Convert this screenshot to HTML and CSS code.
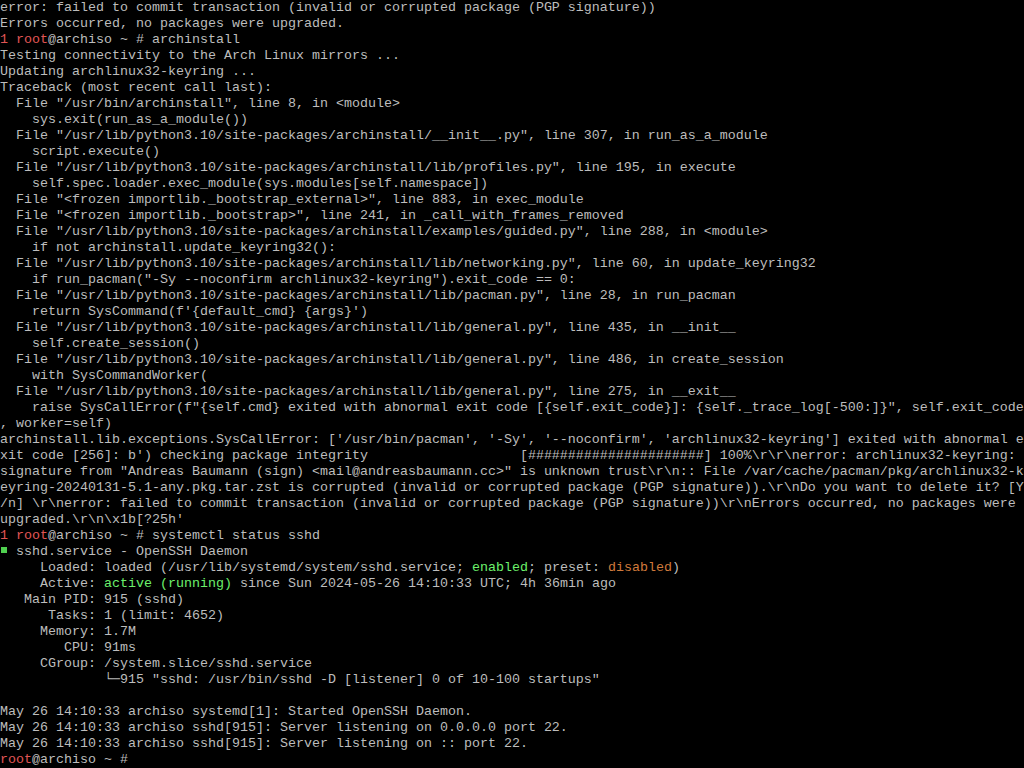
FILE: index.html
```html
<!DOCTYPE html>
<html>
<head>
<meta charset="utf-8">
<link rel="stylesheet" href="styles.css">
</head>
<body>
<div class="term">
<div class="ln">error: failed to commit transaction (invalid or corrupted package (PGP signature))</div>
<div class="ln">Errors occurred, no packages were upgraded.</div>
<div class="ln"><span class="red">1 root</span>@archiso ~ # archinstall</div>
<div class="ln">Testing connectivity to the Arch Linux mirrors ...</div>
<div class="ln">Updating archlinux32-keyring ...</div>
<div class="ln">Traceback (most recent call last):</div>
<div class="ln">  File "/usr/bin/archinstall", line 8, in &lt;module&gt;</div>
<div class="ln">    sys.exit(run_as_a_module())</div>
<div class="ln">  File "/usr/lib/python3.10/site-packages/archinstall/__init__.py", line 307, in run_as_a_module</div>
<div class="ln">    script.execute()</div>
<div class="ln">  File "/usr/lib/python3.10/site-packages/archinstall/lib/profiles.py", line 195, in execute</div>
<div class="ln">    self.spec.loader.exec_module(sys.modules[self.namespace])</div>
<div class="ln">  File "&lt;frozen importlib._bootstrap_external&gt;", line 883, in exec_module</div>
<div class="ln">  File "&lt;frozen importlib._bootstrap&gt;", line 241, in _call_with_frames_removed</div>
<div class="ln">  File "/usr/lib/python3.10/site-packages/archinstall/examples/guided.py", line 288, in &lt;module&gt;</div>
<div class="ln">    if not archinstall.update_keyring32():</div>
<div class="ln">  File "/usr/lib/python3.10/site-packages/archinstall/lib/networking.py", line 60, in update_keyring32</div>
<div class="ln">    if run_pacman("-Sy --noconfirm archlinux32-keyring").exit_code == 0:</div>
<div class="ln">  File "/usr/lib/python3.10/site-packages/archinstall/lib/pacman.py", line 28, in run_pacman</div>
<div class="ln">    return SysCommand(f'{default_cmd} {args}')</div>
<div class="ln">  File "/usr/lib/python3.10/site-packages/archinstall/lib/general.py", line 435, in __init__</div>
<div class="ln">    self.create_session()</div>
<div class="ln">  File "/usr/lib/python3.10/site-packages/archinstall/lib/general.py", line 486, in create_session</div>
<div class="ln">    with SysCommandWorker(</div>
<div class="ln">  File "/usr/lib/python3.10/site-packages/archinstall/lib/general.py", line 275, in __exit__</div>
<div class="ln">    raise SysCallError(f"{self.cmd} exited with abnormal exit code [{self.exit_code}]: {self._trace_log[-500:]}", self.exit_code</div>
<div class="ln">, worker=self)</div>
<div class="ln">archinstall.lib.exceptions.SysCallError: ['/usr/bin/pacman', '-Sy', '--noconfirm', 'archlinux32-keyring'] exited with abnormal e</div>
<div class="ln">xit code [256]: b') checking package integrity                   [######################] 100%\r\r\nerror: archlinux32-keyring: </div>
<div class="ln">signature from "Andreas Baumann (sign) &lt;mail@andreasbaumann.cc&gt;" is unknown trust\r\n:: File /var/cache/pacman/pkg/archlinux32-k</div>
<div class="ln">eyring-20240131-5.1-any.pkg.tar.zst is corrupted (invalid or corrupted package (PGP signature)).\r\nDo you want to delete it? [Y</div>
<div class="ln">/n] \r\nerror: failed to commit transaction (invalid or corrupted package (PGP signature))\r\nErrors occurred, no packages were </div>
<div class="ln">upgraded.\r\n\x1b[?25h'</div>
<div class="ln"><span class="red">1 root</span>@archiso ~ # systemctl status sshd</div>
<div class="ln"><span class="dot"></span> sshd.service - OpenSSH Daemon</div>
<div class="ln">     Loaded: loaded (/usr/lib/systemd/system/sshd.service; <span class="green">enabled</span>; preset: <span class="orange">disabled</span>)</div>
<div class="ln">     Active: <span class="green">active (running)</span> since Sun 2024-05-26 14:10:33 UTC; 4h 36min ago</div>
<div class="ln">   Main PID: 915 (sshd)</div>
<div class="ln">      Tasks: 1 (limit: 4652)</div>
<div class="ln">     Memory: 1.7M</div>
<div class="ln">        CPU: 91ms</div>
<div class="ln">     CGroup: /system.slice/sshd.service</div>
<div class="ln">             └─915 "sshd: /usr/bin/sshd -D [listener] 0 of 10-100 startups"</div>
<div class="ln"> </div>
<div class="ln">May 26 14:10:33 archiso systemd[1]: Started OpenSSH Daemon.</div>
<div class="ln">May 26 14:10:33 archiso sshd[915]: Server listening on 0.0.0.0 port 22.</div>
<div class="ln">May 26 14:10:33 archiso sshd[915]: Server listening on :: port 22.</div>
<div class="ln"><span class="red">root</span>@archiso ~ #</div>
</div>
</body>
</html>
```
FILE: styles.css
```css
html, body {
  margin: 0;
  padding: 0;
  background: #000;
}
.term {
  width: 1024px;
  height: 768px;
  overflow: hidden;
  background: #000;
  color: #bdbdbd;
  font-family: "Liberation Mono", "DejaVu Sans Mono", monospace;
  font-size: 13.333px;
}
.ln {
  height: 16px;
  line-height: 16px;
  white-space: pre;
  overflow: hidden;
}
.red {
  color: #e05555;
}
.green {
  color: #6cf06c;
}
.orange {
  color: #d07a3c;
}
.dot {
  display: inline-block;
  width: 6px;
  height: 6px;
  margin: 0 1px;
  background: #4fd04f;
  vertical-align: 2px;
}
```
